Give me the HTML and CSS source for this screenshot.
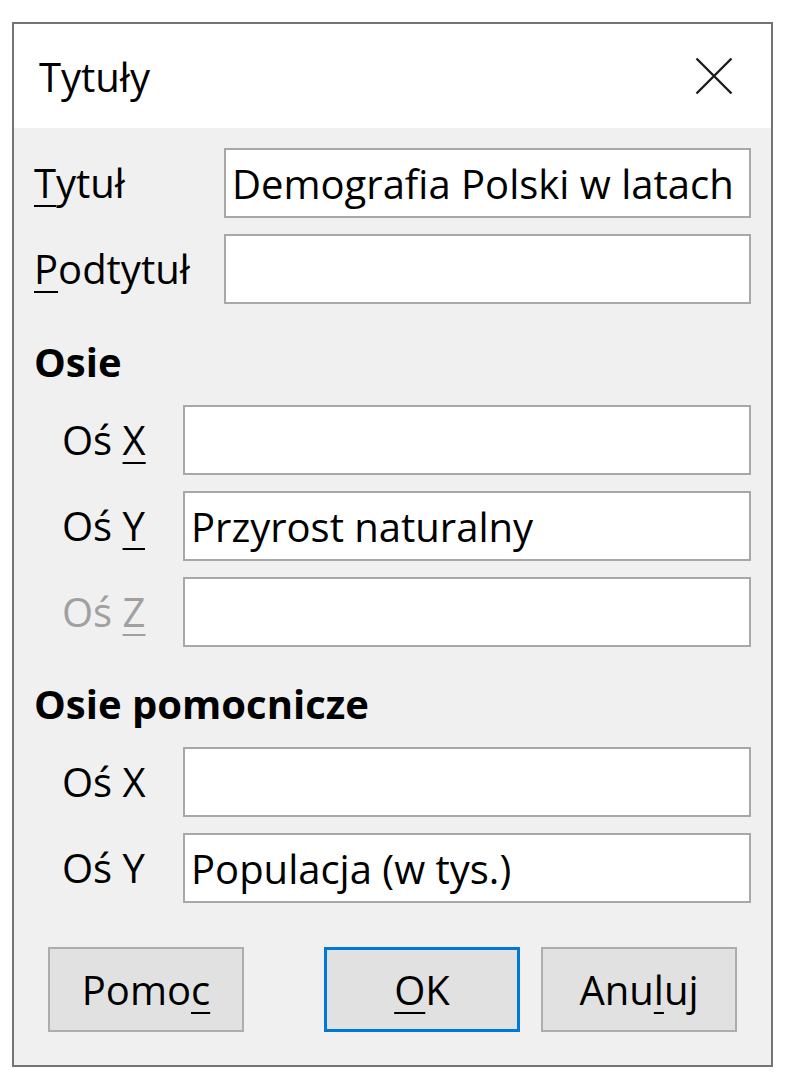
FILE: index.html
```html
<!DOCTYPE html>
<html lang="pl">
<head>
<meta charset="utf-8">
<title>Tytuły</title>
<link rel="stylesheet" href="styles.css">
</head>
<body>
<div class="dialog">
  <div class="titlebar">
    <span class="title">Tytuły</span>
    <svg class="close" width="38" height="38" viewBox="0 0 38 38"><path d="M1.5 1.5L36.5 36.5M36.5 1.5L1.5 36.5" stroke="#1c1c1c" stroke-width="2.4" fill="none"/></svg>
  </div>
  <div class="content">
    <div class="rows main">
      <div class="row"><span class="label"><u>T</u>ytuł</span><div class="field">Demografia Polski w latach</div></div>
      <div class="row"><span class="label"><u>P</u>odtytuł</span><div class="field"></div></div>
    </div>
    <div class="heading">Osie</div>
    <div class="rows sub">
      <div class="row"><span class="label">Oś <u>X</u></span><div class="field"></div></div>
      <div class="row"><span class="label">Oś <u>Y</u></span><div class="field">Przyrost naturalny</div></div>
      <div class="row"><span class="label disabled">Oś <u>Z</u></span><div class="field"></div></div>
    </div>
    <div class="heading">Osie pomocnicze</div>
    <div class="rows sub">
      <div class="row"><span class="label">Oś X</span><div class="field"></div></div>
      <div class="row"><span class="label">Oś Y</span><div class="field">Populacja (w tys.)</div></div>
    </div>
    <div class="buttons">
      <div class="btn">Pomo<u>c</u></div>
      <div class="spacer"></div>
      <div class="btn default"><u>O</u>K</div>
      <div class="btn">Anu<u>l</u>uj</div>
    </div>
  </div>
</div>
</body>
</html>
```

FILE: styles.css
```css
html, body {
  margin: 0;
  padding: 0;
  background: #ffffff;
}
body {
  padding: 22px 0 0 12px;
  font-family: "Open Sans", "Noto Sans", sans-serif;
  font-size: 40px;
  color: #000;
}
.dialog {
  width: 757px;
  border: 2px solid #747474;
  background: #f0f0f0;
}
.titlebar {
  height: 104px;
  background: #ffffff;
  display: flex;
  align-items: center;
  justify-content: space-between;
  padding: 0 38px 0 25px;
}
.title {
  line-height: 1;
  padding-top: 2px;
}
.close {
  display: block;
}
.content {
  padding: 20px 20px 33px 20px;
}
.rows {
  display: flex;
  flex-direction: column;
  gap: 16px;
}
.row {
  display: grid;
  align-items: center;
}
.main .row {
  grid-template-columns: 190px 1fr;
}
.sub .row {
  grid-template-columns: 121px 1fr;
  padding-left: 28px;
}
.label {
  white-space: nowrap;
  line-height: 1;
}
.label.disabled {
  color: #a0a0a0;
}
u {
  text-decoration-thickness: 2px;
  text-underline-offset: 7px;
}
.field {
  box-sizing: border-box;
  height: 70px;
  background: #ffffff;
  border: 2px solid #a8a8a8;
  padding: 0 6px;
  display: flex;
  align-items: center;
  white-space: nowrap;
  overflow: hidden;
}
.heading {
  font-weight: 700;
  line-height: 48px;
  margin: 34px 0 19px 0;
}
.rows.sub + .heading {
  margin-top: 33px;
}
.buttons {
  display: flex;
  gap: 21px;
  margin: 44px 14px 0 14px;
}
.spacer {
  flex: 1;
}
.btn {
  box-sizing: border-box;
  width: 196px;
  height: 85px;
  background: #e1e1e1;
  border: 2px solid #adadad;
  display: flex;
  align-items: center;
  justify-content: center;
}
.btn.default {
  border: 3px solid #0078d7;
}
```
